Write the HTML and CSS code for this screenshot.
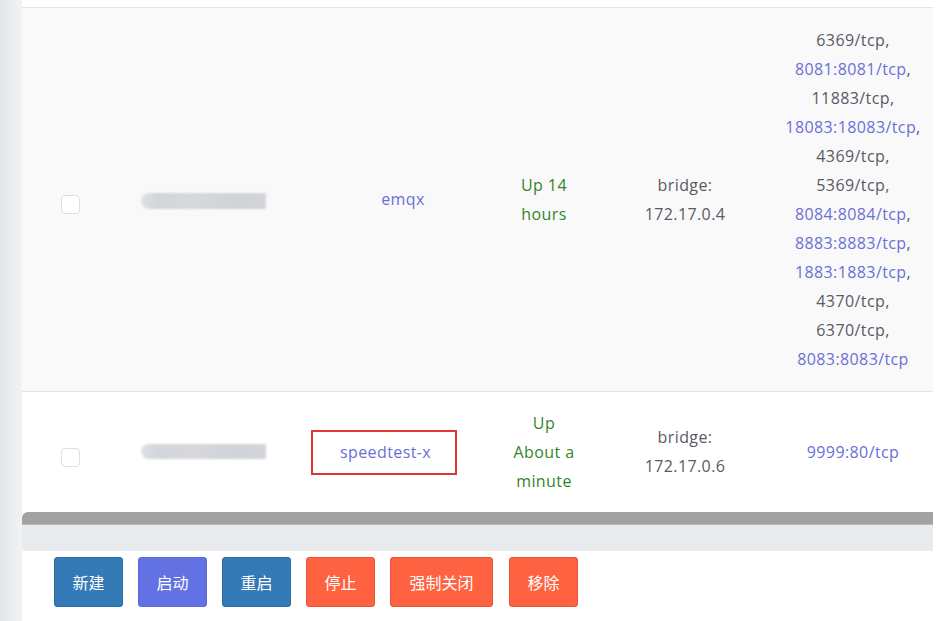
FILE: index.html
```html
<!DOCTYPE html>
<html>
<head>
<meta charset="utf-8">
<link rel="stylesheet" href="styles.css">
</head>
<body>
<div class="page">
  <div class="side"></div>
  <div class="main">
    <div class="table-wrap">
      <table class="tbl">
        <colgroup>
          <col class="c1"><col class="c2"><col class="c3"><col class="c4"><col class="c5"><col class="c6">
        </colgroup>
        <tr class="row row-a">
          <td><span class="chk"></span></td>
          <td><span class="blur"></span></td>
          <td><a class="link">emqx</a></td>
          <td class="status">Up 14<br>hours</td>
          <td class="net">bridge:<br>172.17.0.4</td>
          <td class="ports">
            <span class="p">6369/tcp,</span>
            <span class="p"><a class="link">8081:8081/tcp</a>,</span>
            <span class="p">11883/tcp,</span>
            <span class="p"><a class="link">18083:18083/tcp</a>,</span>
            <span class="p">4369/tcp,</span>
            <span class="p">5369/tcp,</span>
            <span class="p"><a class="link">8084:8084/tcp</a>,</span>
            <span class="p"><a class="link">8883:8883/tcp</a>,</span>
            <span class="p"><a class="link">1883:1883/tcp</a>,</span>
            <span class="p">4370/tcp,</span>
            <span class="p">6370/tcp,</span>
            <span class="p"><a class="link">8083:8083/tcp</a></span>
          </td>
        </tr>
        <tr class="row row-b">
          <td><span class="chk"></span></td>
          <td><span class="blur blur-b"></span></td>
          <td class="mark-cell"><span class="mark"><a class="link">speedtest-x</a></span></td>
          <td class="status">Up<br>About a<br>minute</td>
          <td class="net">bridge:<br>172.17.0.6</td>
          <td class="ports"><a class="link">9999:80/tcp</a></td>
        </tr>
      </table>
    </div>
    <div class="scrollbar"></div>
    <div class="gap"></div>
    <div class="actions">
      <button class="btn blue">新建</button>
      <button class="btn purple">启动</button>
      <button class="btn blue">重启</button>
      <button class="btn red">停止</button>
      <button class="btn red wide">强制关闭</button>
      <button class="btn red">移除</button>
    </div>
  </div>
  <div class="rest"></div>
</div>
</body>
</html>
```
FILE: styles.css
```css
html, body {
  margin: 0;
  padding: 0;
  background: #ffffff;
}
body {
  font-family: "Open Sans", "Noto Sans CJK SC", sans-serif;
  font-size: 16px;
  letter-spacing: 0.4px;
  color: #575b66;
}
.page {
  display: flex;
  width: 947px;
  height: 621px;
  overflow: hidden;
}
.side {
  width: 22px;
  flex: none;
  background: linear-gradient(to right, #e3e4e7 0%, #eceef0 60%, #f1f2f4 100%);
}
.main {
  width: 911px;
  flex: none;
  display: flex;
  flex-direction: column;
}
.rest {
  flex: 1;
  background: #ffffff;
}
.table-wrap {
  padding-top: 7px;
  background: #ffffff;
}
.tbl {
  width: 911px;
  table-layout: fixed;
  border-collapse: collapse;
  border-top: 1px solid #e2e4e8;
}
.c1 { width: 96px; }
.c2 { width: 175px; }
.c3 { width: 220px; }
.c4 { width: 62px; }
.c5 { width: 200px; }
.c6 { width: 158px; }
.tbl td {
  padding: 0;
  text-align: center;
  vertical-align: middle;
  line-height: 29px;
  white-space: nowrap;
}
.row-a {
  height: 384px;
  background: #f9f9f9;
  border-bottom: 1px solid #e2e4e8;
}
.row-b {
  height: 120px;
  background: #ffffff;
}
.row-b td { padding-top: 1px; }
.chk {
  display: inline-block;
  width: 17px;
  height: 17px;
  border: 1px solid #dddfe3;
  border-radius: 4px;
  background: #ffffff;
  margin-top: 8px;
  vertical-align: middle;
}
.blur {
  display: inline-block;
  width: 125px;
  height: 16px;
  background: linear-gradient(to right, #dfe1e5 0%, #d2d5da 12%, #d6d8dc 40%, #cfd2d7 80%, #d4d6da 100%);
  border-radius: 8px 0 0 8px;
  filter: blur(1px);
  vertical-align: middle;
  margin-left: -5px;
}
.blur-b {
  height: 15px;
  margin-top: -4px;
}
.link {
  color: #6a70d6;
  text-decoration: none;
}
.status {
  color: #34842a;
}
.net {
  color: #575b66;
  padding-left: 20px !important;
  box-sizing: border-box;
}
.ports .p {
  display: block;
  color: #575b66;
}
.ports {
  padding-right: 2px !important;
}
.tbl td.mark-cell {
  text-align: left;
  padding-left: 18px;
}
.mark {
  display: inline-block;
  box-sizing: border-box;
  width: 146px;
  height: 45px;
  border: 2px solid #e2323a;
  padding: 6px 0 0 27px;
  line-height: 29px;
}
.scrollbar {
  height: 13px;
  background: #a2a2a2;
  border-radius: 6px 0 0 0;
  border-bottom: 1px solid #b8b8b8;
  box-sizing: border-box;
}
.gap {
  height: 26px;
  background: #e9ebee;
}
.actions {
  flex: 1;
  background: #ffffff;
  display: flex;
  gap: 15px;
  padding: 6px 0 0 32px;
  align-items: flex-start;
}
.btn {
  height: 50px;
  width: 69px;
  border-radius: 3px;
  color: #ffffff;
  font-family: "Noto Sans CJK SC", sans-serif;
  font-size: 16px;
  letter-spacing: 0;
  border: 1px solid transparent;
  padding: 0;
}
.btn.wide { width: 103px; margin-right: 1px; }
.blue { background: #337ab7; border-color: #2e6da4; }
.purple { background: #6272e2; border-color: #5a69d4; }
.red { background: #fe6240; border-color: #e85536; }
```
